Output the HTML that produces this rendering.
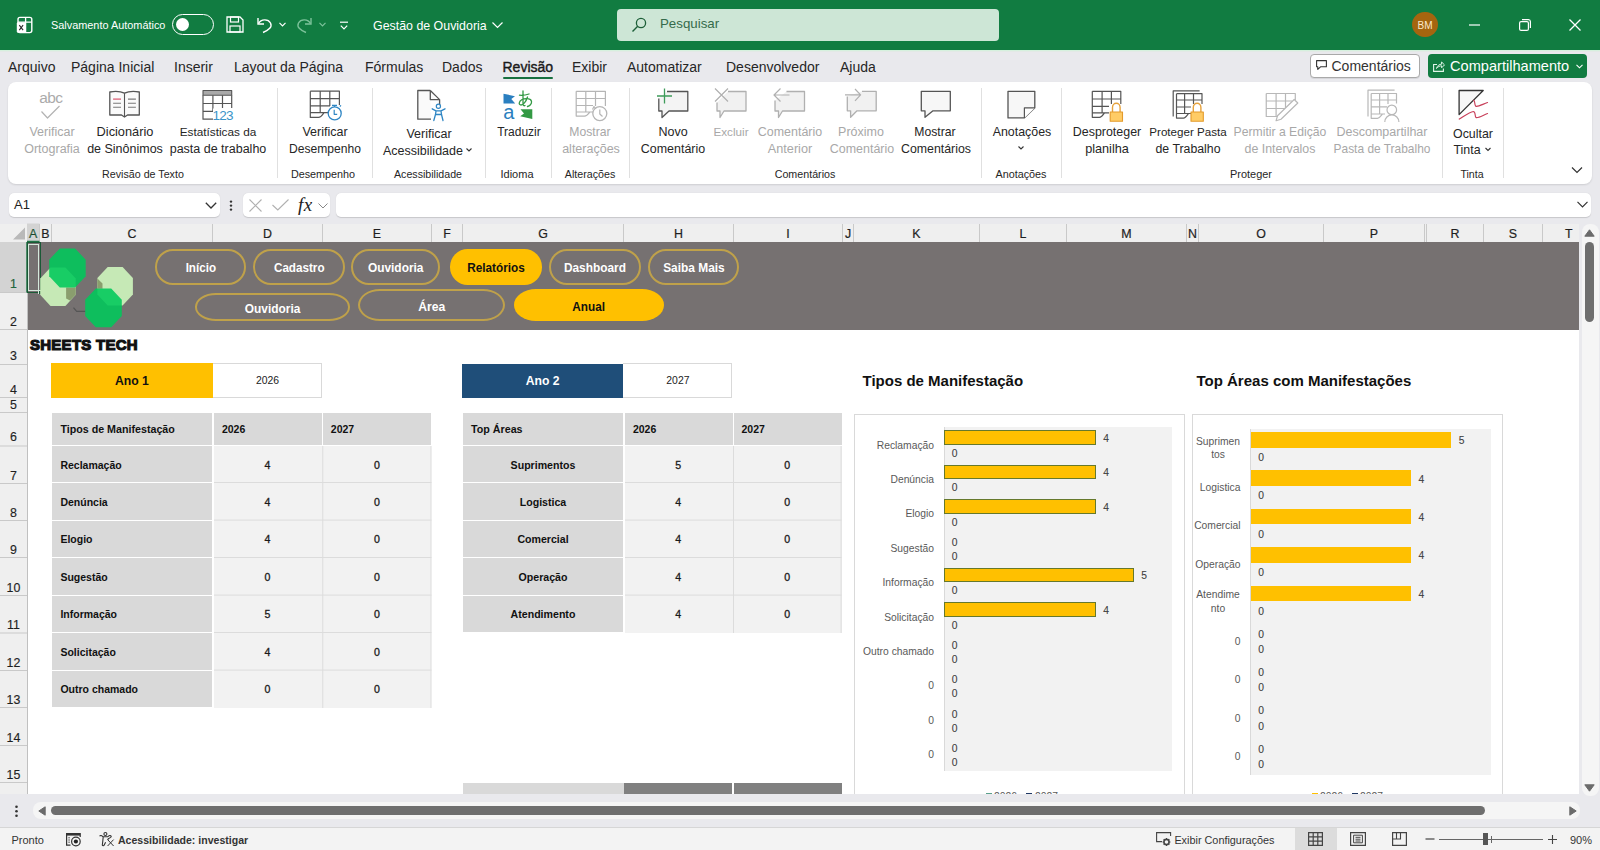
<!DOCTYPE html>
<html><head><meta charset="utf-8">
<style>
*{box-sizing:border-box;margin:0;padding:0}
html,body{width:1600px;height:850px;overflow:hidden;background:#e9e9ed;font-family:"Liberation Sans",sans-serif;color:#262626}
.a{position:absolute}
.t{position:absolute;white-space:nowrap;line-height:16px;height:16px}
.c{text-align:center}
.r{text-align:right}
svg{position:absolute;overflow:visible}
#title{left:0;top:0;width:1600px;height:50px;background:#117c41;color:#fff}
#tabs{left:0;top:50px;width:1600px;height:32px;background:#e9e9ed}
.tab{position:absolute;top:58px;font-size:14px;line-height:18px;color:#262626;white-space:nowrap}
#ribbon{left:8px;top:82px;width:1584px;height:102px;background:#fff;border-radius:8px;box-shadow:0 1px 2px rgba(0,0,0,.12)}
.rt{position:absolute;font-size:12.5px;line-height:16px;white-space:nowrap;text-align:center;color:#262626}
.dis{color:#a8a8a8}
.gl{position:absolute;top:167px;font-size:10.8px;line-height:15px;white-space:nowrap;text-align:center;color:#262626}
.sep{position:absolute;top:88px;width:1px;height:90px;background:#e1e1e1}
</style></head><body>
<!-- TITLE BAR -->
<div id="title" class="a">
  <!-- excel icon -->
  <svg style="left:0;top:0" width="40" height="40" viewBox="0 0 40 40">
    <rect x="18" y="17.4" width="13.8" height="15.2" rx="2" fill="none" stroke="#fff" stroke-width="1.4"/>
    <path d="M25.6 17.4V32.6M18 22.1H31.8" stroke="#fff" stroke-width="1.3"/>
    <rect x="16.8" y="22.3" width="8.9" height="10.5" rx="1.3" fill="#fff"/>
    <path d="M19.3 25.2L23.1 30.2M23.1 25.2L19.3 30.2" stroke="#2b2b2b" stroke-width="1.1"/>
  </svg>
  <div class="t" style="left:51px;top:17px;font-size:10.9px;color:#fff">Salvamento Automático</div>
  <div class="a" style="left:172px;top:14px;width:42px;height:21px;border:1.3px solid #fff;border-radius:11px"></div>
  <div class="a" style="left:176px;top:18px;width:13px;height:13px;background:#fff;border-radius:50%"></div>
  <!-- save -->
  <svg style="left:226px;top:16px" width="18" height="17" viewBox="0 0 18 17">
    <path d="M1 1H14L17 4V16H1Z" fill="none" stroke="#fff" stroke-width="1.3"/>
    <rect x="4.5" y="1" width="8" height="5" fill="none" stroke="#fff" stroke-width="1.2"/>
    <rect x="4" y="10" width="10" height="6" fill="none" stroke="#fff" stroke-width="1.2"/>
  </svg>
  <!-- undo -->
  <svg style="left:256px;top:16px" width="17" height="17" viewBox="0 0 17 17">
    <path d="M2 2V8H8" fill="none" stroke="#fff" stroke-width="1.4"/>
    <path d="M2.5 7.5C5 3 12 2.5 14.5 7C16.5 11 13 14 7 16.5" fill="none" stroke="#fff" stroke-width="1.4"/>
  </svg>
  <svg style="left:279px;top:22px" width="7" height="5" viewBox="0 0 7 5"><path d="M.5 .8L3.5 3.8L6.5 .8" fill="none" stroke="#fff" stroke-width="1.2"/></svg>
  <svg style="left:296px;top:16px" width="17" height="17" viewBox="0 0 17 17">
    <path d="M15 2V8H9" fill="none" stroke="#7cc29a" stroke-width="1.4"/>
    <path d="M14.5 7.5C12 3 5 2.5 2.5 7C.5 11 4 14 10 16.5" fill="none" stroke="#7cc29a" stroke-width="1.4"/>
  </svg>
  <svg style="left:319px;top:22px" width="7" height="5" viewBox="0 0 7 5"><path d="M.5 .8L3.5 3.8L6.5 .8" fill="none" stroke="#7cc29a" stroke-width="1.2"/></svg>
  <svg style="left:340px;top:21px" width="8" height="9" viewBox="0 0 8 9"><path d="M0 1.2H8" stroke="#fff" stroke-width="1.2"/><path d="M.8 4.6L4 7.8L7.2 4.6" fill="none" stroke="#fff" stroke-width="1.2"/></svg>
  <div class="t" style="left:373px;top:18px;font-size:12.4px;color:#fff">Gestão de Ouvidoria</div>
  <svg style="left:492px;top:22px" width="11" height="6" viewBox="0 0 11 6"><path d="M.5 .5L5.5 5.5L10.5 .5" fill="none" stroke="#fff" stroke-width="1.2"/></svg>
  <!-- search -->
  <div class="a" style="left:617px;top:9px;width:382px;height:32px;background:#cde6d6;border-radius:4px"></div>
  <svg style="left:631px;top:17px" width="16" height="16" viewBox="0 0 16 16"><circle cx="10" cy="6" r="4.6" fill="none" stroke="#1d5f38" stroke-width="1.3"/><path d="M6.7 9.3L1.5 14.5" stroke="#1d5f38" stroke-width="1.4"/></svg>
  <div class="t" style="left:660px;top:15px;font-size:13.3px;line-height:17px;color:#356b4b">Pesquisar</div>
  <!-- avatar -->
  <div class="a" style="left:1412.3px;top:11.8px;width:25.4px;height:25.4px;border-radius:50%;background:#a5650f"></div>
  <div class="t c" style="left:1412.3px;top:17.5px;width:25.4px;font-size:10px;color:#fbe9cc">BM</div>
  <svg style="left:1469px;top:23.5px" width="11" height="2" viewBox="0 0 11 2"><path d="M0 1H11" stroke="#fff" stroke-width="1.2"/></svg>
  <svg style="left:1519px;top:19px" width="12" height="12" viewBox="0 0 12 12"><rect x=".6" y="2.6" width="8.8" height="8.8" rx="1.5" fill="none" stroke="#fff" stroke-width="1.2"/><path d="M3 .6H9.5A2 2 0 0 1 11.4 2.5V9" fill="none" stroke="#fff" stroke-width="1.2"/></svg>
  <svg style="left:1569px;top:19px" width="12" height="12" viewBox="0 0 12 12"><path d="M.5 .5L11.5 11.5M11.5 .5L.5 11.5" stroke="#fff" stroke-width="1.3"/></svg>
</div>

<!-- TABS -->
<div id="tabs" class="a"></div>
<div class="a" style="left:0;top:50px;width:1600px;height:1px;background:#d6f1de"></div><div class="a" style="left:0;top:51px;width:1600px;height:1px;background:#e3e9e6"></div>
<div class="tab" style="left:8px">Arquivo</div>
<div class="tab" style="left:71px">Página Inicial</div>
<div class="tab" style="left:174px">Inserir</div>
<div class="tab" style="left:234px">Layout da Página</div>
<div class="tab" style="left:365px">Fórmulas</div>
<div class="tab" style="left:442px">Dados</div>
<div class="tab" style="left:502.5px;color:#1a1a1a;-webkit-text-stroke:0.4px #1a1a1a">Revisão</div>
<div class="a" style="left:503px;top:76.8px;width:50px;height:2.2px;background:#17703f;border-radius:1.5px"></div>
<div class="tab" style="left:572px">Exibir</div>
<div class="tab" style="left:627px">Automatizar</div>
<div class="tab" style="left:726px">Desenvolvedor</div>
<div class="tab" style="left:840px">Ajuda</div>

<div class="a" style="left:1310px;top:54px;width:110px;height:24px;background:#fff;border:1px solid #a9a9a9;border-radius:4px;box-shadow:0 1px 0 rgba(0,0,0,.08)"></div>
<svg style="left:1316px;top:60px" width="11" height="10" viewBox="0 0 11 10"><path d="M.6 .6H10.4V6.8H4.5L1.8 9.4V6.8H.6Z" fill="none" stroke="#333" stroke-width="1.1" stroke-linejoin="round"/></svg>
<div class="tab" style="left:1331.5px;top:57px;color:#333">Comentários</div>
<div class="a" style="left:1428px;top:54px;width:159px;height:24px;background:#117c41;border-radius:4px"></div>
<svg style="left:1433px;top:60px" width="12" height="12" viewBox="0 0 12 12"><path d="M4 4.5H.6V11.4H10.4V8.5" fill="none" stroke="#e0f5e8" stroke-width="1.1"/><path d="M3.5 8.5C4.2 5.5 6.5 4.2 8.6 4.2V2L11.5 4.9L8.6 7.8V5.8C6.8 5.8 5 6.6 3.5 8.5Z" fill="none" stroke="#e0f5e8" stroke-width="1" stroke-linejoin="round"/></svg>
<div class="tab" style="left:1450px;top:57px;color:#fff;font-size:14.6px">Compartilhamento</div>
<svg style="left:1576px;top:64px" width="7" height="5" viewBox="0 0 7 5"><path d="M.5 .8L3.5 3.8L6.5 .8" fill="none" stroke="#fff" stroke-width="1.1"/></svg>

<!-- RIBBON -->
<div id="ribbon" class="a"></div>
<!-- RIBBON_CONTENT -->
<svg style="left:0;top:0" width="1600" height="200" viewBox="0 0 1600 200">
 <g fill="none" stroke-linejoin="round">
  <!-- abc check (disabled) -->
  <text x="50.8" y="102.7" font-family="Liberation Sans" font-size="15.5" fill="#ababab" text-anchor="middle" letter-spacing="-0.6">abc</text>
  <path d="M41.5 111.5L47.5 118L59.5 106" stroke="#b3b3b3" stroke-width="1.2"/>
  <!-- book -->
  <path d="M109.8 92C114 91.3 120.5 91.3 124.5 93.2C128.5 91.3 135 91.3 139.3 92V115H127.5L124.5 117L121.5 115H109.8Z" fill="#fafafa" stroke="#555" stroke-width="1.3"/>
  <path d="M124.5 93.2V116.5" stroke="#555" stroke-width="1.1"/>
  <path d="M113.1 99.1H121" stroke="#d9546c" stroke-width="1.2"/>
  <path d="M113.1 103.2H121M113.1 107.3H121M128 99.1H135.9M128 103.2H135.9M128 107.3H135.9" stroke="#7a7a7a" stroke-width="1.1"/>
  <!-- stats -->
  <rect x="203" y="90.5" width="28.7" height="4.7" fill="#a9a9a9" stroke="#555" stroke-width="1.1"/>
  <path d="M203 95.2V119.2H213M203 103.5H231.7M203 111.4H213M212.9 95.2V111.4M222.5 95.2V108M231.7 95.2V108" stroke="#555" stroke-width="1.2"/>
  <rect x="213" y="108.5" width="20" height="12" fill="#fff" stroke="none"/>
  <text x="222.6" y="119.7" font-family="Liberation Sans" font-size="13.5" fill="#3a94c9" text-anchor="middle" letter-spacing="-0.8">123</text>
  <!-- desempenho -->
  <path d="M310.3 91.2H339.4V105M310.3 91.2V117.4H318.5C321 117.4 322 115.5 324 112.7H328M310.3 98.65H339.4M310.3 105.9H330M310.3 112.7H324M320.2 91.2V112.7M329.8 91.2V106" stroke="#555" stroke-width="1.2"/>
  <circle cx="334.7" cy="113.4" r="6.5" fill="#fff" stroke="#2f86c4" stroke-width="1.3"/>
  <path d="M334.2 109.7V114.3H337.2M332 105.4H337M334.5 105.4V106.9M339.8 106.5L341 105.3" stroke="#2f86c4" stroke-width="1.2"/>
  <!-- acessibilidade -->
  <path d="M430.3 90.5H417.8V119.2H431M430.3 90.5L439.6 99.6V105M430.3 90.5V99.6H439.6" fill="#fafafa" stroke="#555" stroke-width="1.3"/>
  <circle cx="438.4" cy="106.3" r="2.1" fill="#fff" stroke="#2f86c4" stroke-width="1.2"/>
  <path d="M432.2 108.8L436 110.8H441L445 108.8M436 110.8L435.5 114.5L433.8 120.5M441 110.8L441.5 114.5L443 120.5M435.5 114.5H441.5" stroke="#2f86c4" stroke-width="1.3" stroke-linecap="round"/>
  <!-- traduzir -->
  <path d="M503.5 93.7L515 96.2L511.3 99L515.2 103.5H503.5Z" fill="#2a7fc0" stroke="none"/>
  <text x="508.9" y="119" font-family="Liberation Sans" font-size="20" fill="#2a7fc0" text-anchor="middle">a</text>
  <path d="M519.5 95.2C522.5 95.5 526 95 529 94M523 91V103.5C523 105.5 524 106.2 525 105.5M527.5 97C526 102 523 105 521 105C518.5 105 518.5 101.5 522 99.5C525 98 531 98 531.5 101.5C532 104 529.5 106 527.5 106.5" stroke="#339944" stroke-width="1.3" stroke-linecap="round"/>
  <path d="M532.3 119L520.2 116.2L524 113.5L520.5 109.2H532.3Z" fill="#339944" stroke="none"/>
  <!-- alteracoes (disabled) -->
  <path d="M576.2 91.3H605.4V105M576.2 91.3V116.1H584.5C587 116.1 588 114.5 590 112H593M576.2 98.5H605.4M576.2 105.5H593M576.2 112H590M585.8 91.3V112M595.5 91.3V106M605.4 91.3V106" stroke="#b5b5b5" stroke-width="1.2"/>
  <circle cx="599.8" cy="113.6" r="7" fill="#fff" stroke="#b5b5b5" stroke-width="1.3"/>
  <path d="M599.8 109.5V114L602.5 116.5M592.5 109.5L594 106.5L596 109" stroke="#b5b5b5" stroke-width="1.2"/>
  <!-- novo comentario -->
  <path d="M667 91.5H687.8V111H669L662 117.5V111H658.8V98.5" fill="#f4f4f4" stroke="#555" stroke-width="1.3"/>
  <path d="M664.5 88.5V103.5M657 96H672" stroke="#3e9c5a" stroke-width="1.3"/>
  <!-- excluir -->
  <path d="M728 91.5H746V111H724L720 117.5V111H717V102.5" fill="#f1f1f1" stroke="#b0b0b0" stroke-width="1.3"/>
  <path d="M715 88.5L728 101.5M728 88.5L715 101.5" stroke="#b0b0b0" stroke-width="1.2"/>
  <!-- anterior -->
  <path d="M786.5 91.5H804.5V111H782.5L778.5 117.5V111H775V100.5" fill="#f1f1f1" stroke="#b0b0b0" stroke-width="1.3"/>
  <path d="M774.5 95H789.5M780.5 88.5L774 95L780.5 101.5" stroke="#b0b0b0" stroke-width="1.2"/>
  <!-- proximo -->
  <path d="M862 91.3H876.2V110.8H857L850.6 117.3V110.8H847.3V96.6" fill="#f1f1f1" stroke="#b0b0b0" stroke-width="1.3"/>
  <path d="M845 94.8H860.6M855 89L860.6 94.8L855 100.8" stroke="#b0b0b0" stroke-width="1.2"/>
  <!-- mostrar comentarios -->
  <path d="M921.3 91.3H950.3V110.8H933L925 117.3V110.8H921.3Z" fill="#f7f7f7" stroke="#555" stroke-width="1.3"/>
  <!-- anotacoes -->
  <path d="M1008 91.3H1034.8V107.9L1024.4 117.9H1008Z" fill="#f7f7f7" stroke="#555" stroke-width="1.3"/>
  <path d="M1024.4 117.9V107.9H1034.8" fill="#fff" stroke="#555" stroke-width="1.2"/>
  <!-- desproteger -->
  <path d="M1092.3 91.3H1120.8V104M1092.3 91.3V117.3H1099.5C1101.5 117.3 1102.5 115.5 1104.5 112.8H1109M1092.3 99H1120.8M1092.3 106.3H1109M1092.3 112.8H1104.5M1102.1 91.3V112.8M1111.4 91.3V104" stroke="#555" stroke-width="1.2"/>
  <path d="M1112.5 112V107.5A3.8 4.2 0 0 1 1120.1 107.5V112" fill="none" stroke="#e6a23c" stroke-width="1.4"/>
  <rect x="1110.2" y="112" width="12.3" height="9.2" fill="#ffcc66" stroke="#e39a2b" stroke-width="1.1"/>
  <!-- proteger pasta -->
  <path d="M1173.2 116.5V90.9H1199.6" stroke="#555" stroke-width="1.2"/>
  <path d="M1176.5 93.7H1202V104M1176.5 93.7V118.1H1183.5C1185.5 118.1 1186.5 116.3 1188.5 113.5H1191M1176.5 100H1202M1176.5 107H1191M1176.5 113.5H1188.5M1184.6 93.7V113.5M1193.5 93.7V104" stroke="#555" stroke-width="1.2"/>
  <path d="M1193.3 112V107.5A3.8 4.2 0 0 1 1200.9 107.5V112" fill="none" stroke="#e6a23c" stroke-width="1.4"/>
  <rect x="1191" y="112" width="12.3" height="9.2" fill="#ffcc66" stroke="#e39a2b" stroke-width="1.1"/>
  <!-- permitir edicao (disabled) -->
  <path d="M1266.25 93.5H1295.3V100M1266.25 93.5V116.5H1284M1266.25 101H1292M1266.25 108.5H1287M1276.1 93.5V116.5M1285.5 93.5V108" stroke="#b8b8b8" stroke-width="1.2"/>
  <path d="M1294.2 99.5L1297.8 103L1281 119.2L1276.1 120.7L1277.5 115.8Z" fill="#fff" stroke="#b8b8b8" stroke-width="1.2"/>
  <!-- descompartilhar (disabled) -->
  <path d="M1368 116.5V90.2H1394.6" stroke="#b8b8b8" stroke-width="1.2"/>
  <path d="M1371.2 93.5H1396.5V103.5M1371.2 93.5V118.3H1377.5C1379.5 118.3 1380.5 116.5 1382.5 114H1385M1371.2 100H1396.5M1371.2 106.8H1387M1371.2 114H1385M1379.6 93.5V114M1388 93.5V104" stroke="#b8b8b8" stroke-width="1.2"/>
  <circle cx="1391.8" cy="109.9" r="4.8" fill="#fff" stroke="#b8b8b8" stroke-width="1.2"/>
  <path d="M1384.8 122A7 7 0 0 1 1398.9 122" fill="#fff" stroke="#b8b8b8" stroke-width="1.2"/>
  <!-- tinta -->
  <path d="M1459.1 90.5H1483.2L1459.1 114.6Z" fill="#f6f6f6" stroke="#333" stroke-width="1.3"/>
  <path d="M1473.6 100.3C1475.5 101 1474 104.5 1475.8 106.2C1477.5 107.3 1483 104 1487.5 102.5" stroke="#c8405a" stroke-width="1.2" stroke-linecap="round"/>
  <path d="M1459.3 119.1C1464 116.2 1470 111.8 1473.3 111.5C1476 111.5 1474.5 116.5 1476 117.5C1478 118.5 1483 115.2 1487.5 113.5" stroke="#c8405a" stroke-width="1.2" stroke-linecap="round"/>
 </g>
 <g stroke="#e0e0e0" stroke-width="1">
  <path d="M277.5 88V178M372.5 88V178M485.5 88V178M551.5 88V178M629.5 88V178M981.5 88V178M1061.5 88V178M1442.5 88V178M1503.5 88V178"/>
 </g>
 <g fill="none" stroke="#333" stroke-width="1.1">
  <path d="M466.5 148.5L469 151L471.5 148.5"/>
  <path d="M1018.5 146.5L1021 149L1023.5 146.5"/>
  <path d="M1485.5 148L1488 150.5L1490.5 148"/>
  <path d="M1572 167.5L1577 172.5L1582 167.5" stroke-width="1.2"/>
 </g>
</svg>
<div class="rt dis" style="left:12px;width:80px;top:124px">Verificar</div>
<div class="rt dis" style="left:12px;width:80px;top:141px">Ortografia</div>
<div class="rt" style="left:85px;width:80px;top:124px;font-size:12.8px">Dicionário</div>
<div class="rt" style="left:85px;width:80px;top:141px">de Sinônimos</div>
<div class="rt" style="left:168px;width:100px;top:124px;font-size:11.8px">Estatísticas da</div>
<div class="rt" style="left:168px;width:100px;top:141px;font-size:12.5px">pasta de trabalho</div>
<div class="gl" style="left:93px;width:100px;font-size:10.7px">Revisão de Texto</div>
<div class="rt" style="left:285px;width:80px;top:124px">Verificar</div>
<div class="rt" style="left:285px;width:80px;top:141px;font-size:12.1px">Desempenho</div>
<div class="gl" style="left:283px;width:80px">Desempenho</div>
<div class="rt" style="left:379px;width:100px;top:125.5px">Verificar</div>
<div class="rt" style="left:373px;width:100px;top:142.5px">Acessibilidade</div>
<div class="gl" style="left:378px;width:100px;font-size:10.65px">Acessibilidade</div>
<div class="rt" style="left:479px;width:80px;top:124px;font-size:12px">Traduzir</div>
<div class="gl" style="left:477px;width:80px;font-size:11px">Idioma</div>
<div class="rt dis" style="left:550px;width:80px;top:124px;font-size:12.2px">Mostrar</div>
<div class="rt dis" style="left:551px;width:80px;top:141px">alterações</div>
<div class="gl" style="left:550px;width:80px;font-size:10.7px">Alterações</div>
<div class="rt" style="left:633px;width:80px;top:124px">Novo</div>
<div class="rt" style="left:633px;width:80px;top:141px;font-size:12.45px">Comentário</div>
<div class="rt dis" style="left:701px;width:60px;top:124px;font-size:11.7px">Excluir</div>
<div class="rt dis" style="left:750px;width:80px;top:124px;font-size:12.45px">Comentário</div>
<div class="rt dis" style="left:750px;width:80px;top:141px;font-size:12.7px">Anterior</div>
<div class="rt dis" style="left:821px;width:80px;top:124px;font-size:12.5px">Próximo</div>
<div class="rt dis" style="left:822px;width:80px;top:141px;font-size:12.45px">Comentário</div>
<div class="rt" style="left:895px;width:80px;top:124px;font-size:12.2px">Mostrar</div>
<div class="rt" style="left:896px;width:80px;top:141px;font-size:12.35px">Comentários</div>
<div class="gl" style="left:755px;width:100px;font-size:10.7px">Comentários</div>
<div class="rt" style="left:982px;width:80px;top:124px;font-size:12.4px">Anotações</div>
<div class="gl" style="left:981px;width:80px;font-size:10.8px">Anotações</div>
<div class="rt" style="left:1067px;width:80px;top:124px;font-size:12.45px">Desproteger</div>
<div class="rt" style="left:1067px;width:80px;top:141px;font-size:12.7px">planilha</div>
<div class="rt" style="left:1138px;width:100px;top:124px;font-size:11.6px">Proteger Pasta</div>
<div class="rt" style="left:1138px;width:100px;top:141px;font-size:12.3px">de Trabalho</div>
<div class="rt dis" style="left:1230px;width:100px;top:124px;font-size:12.2px">Permitir a Edição</div>
<div class="rt dis" style="left:1230px;width:100px;top:141px;font-size:12.4px">de Intervalos</div>
<div class="rt dis" style="left:1327px;width:110px;top:124px;font-size:12.5px">Descompartilhar</div>
<div class="rt dis" style="left:1327px;width:110px;top:141px;font-size:11.95px">Pasta de Trabalho</div>
<div class="gl" style="left:1211px;width:80px;font-size:10.95px">Proteger</div>
<div class="rt" style="left:1433px;width:80px;top:125.5px;font-size:12.4px">Ocultar</div>
<div class="rt" style="left:1427px;width:80px;top:142px;font-size:12.4px">Tinta</div>
<div class="gl" style="left:1432px;width:80px;font-size:10.6px">Tinta</div>


<!-- FORMULA BAR -->
<!-- FORMULA_CONTENT -->

<!-- GRID -->
<!-- GRID_CONTENT -->
<!-- formula bar -->
<div class="a" style="left:9px;top:193px;width:211px;height:24px;background:#fff;border-radius:5px;box-shadow:0 .5px 1px rgba(0,0,0,.15)"></div>
<div class="t" style="left:14px;top:197px;font-size:13px;color:#222">A1</div>
<svg style="left:205px;top:202px" width="12" height="7" viewBox="0 0 12 7"><path d="M.8 .8L6 6L11.2 .8" fill="none" stroke="#333" stroke-width="1.3"/></svg>
<svg style="left:229px;top:200px" width="4" height="12" viewBox="0 0 4 12"><circle cx="2" cy="1.6" r="1.2" fill="#333"/><circle cx="2" cy="5.6" r="1.2" fill="#333"/><circle cx="2" cy="9.6" r="1.2" fill="#333"/></svg>
<div class="a" style="left:242.5px;top:193px;width:87px;height:24px;background:#fff;border-radius:5px;box-shadow:0 .5px 1px rgba(0,0,0,.15)"></div>
<svg style="left:249px;top:199px" width="13" height="13" viewBox="0 0 13 13"><path d="M.5 .5L12.5 12.5M12.5 .5L.5 12.5" stroke="#b0b0b0" stroke-width="1.1"/></svg>
<svg style="left:272px;top:199px" width="17" height="12" viewBox="0 0 17 12"><path d="M.5 6L5.8 11L16.5 .5" fill="none" stroke="#b0b0b0" stroke-width="1.1"/></svg>
<div class="t" style="left:298px;top:194.5px;font-family:'Liberation Serif',serif;font-style:italic;font-size:19px;line-height:20px;height:20px;color:#222;letter-spacing:0.5px">fx</div>
<svg style="left:318px;top:203px" width="10" height="6" viewBox="0 0 10 6"><path d="M.5 .5L5 5L9.5 .5" fill="none" stroke="#888" stroke-width="1"/></svg>
<div class="a" style="left:336px;top:193px;width:1255px;height:24px;background:#fff;border-radius:5px;box-shadow:0 .5px 1px rgba(0,0,0,.15)"></div>
<svg style="left:1577px;top:201px" width="11" height="7" viewBox="0 0 11 7"><path d="M.5 .8L5.5 5.8L10.5 .8" fill="none" stroke="#333" stroke-width="1.2"/></svg>

<!-- column headers -->
<div class="a" style="left:0;top:223.5px;width:1579px;height:19px;background:#efefef"></div>
<div class="a" style="left:0;top:242px;width:27.5px;height:552px;background:#efefef;border-right:1px solid #c0c0c0"></div>
<svg style="left:0;top:223px" width="1580" height="20" viewBox="0 223 1580 20">
  <path d="M13 239.5L25 227.5V239.5Z" fill="#b9b9b9"/>
  <rect x="27" y="223.5" width="12.5" height="18.5" fill="#d3d3d3"/>
  <g stroke="#c9c9c9" stroke-width="1">
   <path d="M39.5 224V242M51.5 224V242M212.5 224V242M322.5 224V242M431.5 224V242M462.5 224V242M623.5 224V242M733.5 224V242M842.5 224V242M853.5 224V242M979.5 224V242M1066.5 224V242M1186.5 224V242M1198.5 224V242M1323.5 224V242M1424.5 224V242M1426.5 224V242M1483.5 224V242M1542.5 224V242"/>
  </g>
  <path d="M27 241.5H39.5" stroke="#217346" stroke-width="1.5"/>
</svg>
<div class="a" style="left:0;top:224.5px;width:1579px;height:19px;font-size:12.4px;line-height:19px;color:#1f1f1f;-webkit-text-stroke:0.2px #1f1f1f">
 <span class="a c" style="left:27px;width:12.5px;color:#1e6b3e">A</span>
 <span class="a c" style="left:39.5px;width:12px">B</span>
 <span class="a c" style="left:51.5px;width:161px">C</span>
 <span class="a c" style="left:212.5px;width:110px">D</span>
 <span class="a c" style="left:322.5px;width:109px">E</span>
 <span class="a c" style="left:431.5px;width:31px">F</span>
 <span class="a c" style="left:462.5px;width:161px">G</span>
 <span class="a c" style="left:623.5px;width:110px">H</span>
 <span class="a c" style="left:733.5px;width:109px">I</span>
 <span class="a c" style="left:842.5px;width:11px">J</span>
 <span class="a c" style="left:853.5px;width:126px">K</span>
 <span class="a c" style="left:979.5px;width:87px">L</span>
 <span class="a c" style="left:1066.5px;width:120px">M</span>
 <span class="a c" style="left:1186.5px;width:12px">N</span>
 <span class="a c" style="left:1198.5px;width:125px">O</span>
 <span class="a c" style="left:1323.5px;width:101px">P</span>
 <span class="a c" style="left:1426.5px;width:57px">R</span>
 <span class="a c" style="left:1483.5px;width:59px">S</span>
 <span class="a" style="left:1565px">T</span>
</div>
<!-- row headers -->
<div class="a" style="left:0;top:242px;width:27px;height:50.5px;background:#d3d3d3"></div>
<svg style="left:0;top:242px" width="28" height="553" viewBox="0 242 28 553">
 <g stroke="#c9c9c9" stroke-width="1">
  <path d="M0 292.5H27M0 329.5H27M0 364.5H27M0 397.5H27M0 412.5H27M0 446H27M0 483.5H27M0 520.5H27M0 557.5H27M0 595.5H27M0 633H27M0 670.5H27M0 707.5H27M0 745.5H27M0 782.5H27"/>
 </g>
 <path d="M27 242V292.5" stroke="#217346" stroke-width="1.5"/>
</svg>
<div class="a" style="left:0;top:0;width:27px;height:795px;font-size:12.4px;line-height:14px;color:#1f1f1f;-webkit-text-stroke:0.15px #1f1f1f">
 <span class="a c" style="left:0;width:27px;top:277px;color:#1e6b3e">1</span>
 <span class="a c" style="left:0;width:27px;top:314.5px">2</span>
 <span class="a c" style="left:0;width:27px;top:349px">3</span>
 <span class="a c" style="left:0;width:27px;top:382.5px">4</span>
 <span class="a c" style="left:0;width:27px;top:397.5px">5</span>
 <span class="a c" style="left:0;width:27px;top:430px">6</span>
 <span class="a c" style="left:0;width:27px;top:468.5px">7</span>
 <span class="a c" style="left:0;width:27px;top:505.5px">8</span>
 <span class="a c" style="left:0;width:27px;top:542.5px">9</span>
 <span class="a c" style="left:0;width:27px;top:580.5px">10</span>
 <span class="a c" style="left:0;width:27px;top:617.5px">11</span>
 <span class="a c" style="left:0;width:27px;top:655.5px">12</span>
 <span class="a c" style="left:0;width:27px;top:693px">13</span>
 <span class="a c" style="left:0;width:27px;top:730.5px">14</span>
 <span class="a c" style="left:0;width:27px;top:768px">15</span>
</div>
<!-- sheet -->
<div class="a" style="left:28px;top:242px;width:1551px;height:552px;background:#fff"></div>
<div class="a" style="left:28px;top:242px;width:1551px;height:87.5px;background:#767171"></div>
<!-- selected A1 -->
<div class="a" style="left:27px;top:242.3px;width:13.8px;height:50.4px;border:1.3px solid #1a5a36"></div>
<div class="a" style="left:28.3px;top:243.6px;width:11.2px;height:47.8px;border:1px solid #d5e9dc"></div>
<div class="a" style="left:37.6px;top:290px;width:4.4px;height:4.4px;background:#1a5a36;border-left:1px solid #d5e9dc;border-top:1px solid #d5e9dc"></div>


<!-- GRID2 -->
<div class="a" style="left:0;top:0;width:1579px;height:794px;overflow:hidden">
<svg style="left:0;top:0" width="1600" height="850" viewBox="0 0 1600 850">
<defs><clipPath id="l1"><polygon points="50.2,267.4 65.4,267.4 75.7,278.6 75.7,294.8 65.4,306 50.2,306 40.2,294.8 40.2,278.6"/></clipPath></defs>
<polygon points="50.5,267.4 65.4,267.4 75.7,278.6 75.7,294.8 65.4,306.0 50.5,306.0 40.2,294.8 40.2,278.6" fill="#c6e9b6" fill-opacity="1"/>
<polygon points="107.7,266.9 122.6,266.9 132.9,278.1 132.9,294.4 122.6,305.6 107.7,305.6 97.4,294.4 97.4,278.1" fill="#c6e9b6" fill-opacity="1"/>
<polygon points="66.1,287.5 75.7,287.5 75.7,294.8 70,300.5 66.1,298.5" fill="#8a9e6e"/>
<polygon points="97.4,278.6 102.5,283.5 102.5,288.8 97.4,288.8" fill="#8a9e6e"/>
<path d="M73.5 307.7L76.7 311.4H85.5" stroke="#555" stroke-width="1.2" fill="none"/>
<polygon points="59.8,248.4 75.1,248.4 85.7,259.7 85.7,276.2 75.1,287.5 59.8,287.5 49.2,276.2 49.2,259.7" fill="#00c85a" fill-opacity="0.88"/>
<polygon points="95.8,288.6 111.2,288.6 121.8,299.8 121.8,316.1 111.2,327.3 95.8,327.3 85.2,316.1 85.2,299.8" fill="#00c85a" fill-opacity="0.88"/>
</svg>
<div class="a" style="left:154.5px;top:248.8px;width:91.69999999999999px;height:36.19999999999999px;border:2.1px solid #bfa14a;border-radius:18.099999999999994px/18.099999999999994px"></div>
<div class="t c" style="left:154.5px;width:91.69999999999999px;top:260px;font-size:12.5px;font-weight:700;color:#fff;transform:scaleX(0.932)">Início</div>
<div class="a" style="left:252.5px;top:248.8px;width:92.5px;height:36.19999999999999px;border:2.1px solid #bfa14a;border-radius:18.099999999999994px/18.099999999999994px"></div>
<div class="t c" style="left:252.5px;width:92.5px;top:260px;font-size:12.5px;font-weight:700;color:#fff;transform:scaleX(0.934)">Cadastro</div>
<div class="a" style="left:350.6px;top:248.8px;width:89.39999999999998px;height:36.19999999999999px;border:2.1px solid #bfa14a;border-radius:18.099999999999994px/18.099999999999994px"></div>
<div class="t c" style="left:350.6px;width:89.39999999999998px;top:260px;font-size:12.5px;font-weight:700;color:#fff;transform:scaleX(0.952)">Ouvidoria</div>
<div class="a" style="left:450px;top:249.4px;width:91.89999999999998px;height:35.400000000000006px;background:#ffc000;border-radius:17.700000000000003px/17.700000000000003px"></div>
<div class="t c" style="left:450px;width:91.89999999999998px;top:260px;font-size:12.5px;font-weight:700;color:#111;transform:scaleX(0.941)">Relatórios</div>
<div class="a" style="left:549.4px;top:248.8px;width:91.80000000000007px;height:36.19999999999999px;border:2.1px solid #bfa14a;border-radius:18.099999999999994px/18.099999999999994px"></div>
<div class="t c" style="left:549.4px;width:91.80000000000007px;top:260px;font-size:12.5px;font-weight:700;color:#fff;transform:scaleX(0.949)">Dashboard</div>
<div class="a" style="left:647.5px;top:248.8px;width:91.89999999999998px;height:36.19999999999999px;border:2.1px solid #bfa14a;border-radius:18.099999999999994px/18.099999999999994px"></div>
<div class="t c" style="left:647.5px;width:91.89999999999998px;top:260px;font-size:12.5px;font-weight:700;color:#fff;transform:scaleX(0.952)">Saiba Mais</div>
<div class="a" style="left:194.8px;top:293px;width:155.2px;height:27.600000000000023px;border:2.1px solid #bfa14a;border-radius:21px/13.800000000000011px"></div>
<div class="t c" style="left:194.8px;width:155.2px;top:300.5px;font-size:12.5px;font-weight:700;color:#fff;transform:scaleX(0.952)">Ouvidoria</div>
<div class="a" style="left:357.5px;top:289.4px;width:147.5px;height:32.10000000000002px;border:2.1px solid #bfa14a;border-radius:22px/16.05000000000001px"></div>
<div class="t c" style="left:357.5px;width:147.5px;top:298.5px;font-size:12.5px;font-weight:700;color:#fff;transform:scaleX(0.971)">Área</div>
<div class="a" style="left:514.4px;top:289.4px;width:149.39999999999998px;height:31.900000000000034px;background:#ffc000;border-radius:22px/15.950000000000017px"></div>
<div class="t c" style="left:514.4px;width:149.39999999999998px;top:298.5px;font-size:12.5px;font-weight:700;color:#111;transform:scaleX(0.94)">Anual</div>
<div class="t" style="left:30px;top:336.5px;font-size:15.5px;line-height:15px;height:15px;font-weight:700;color:#111;transform:scaleX(0.965);transform-origin:0 0;-webkit-text-stroke:1.2px #111;letter-spacing:0.3px">SHEETS TECH</div>
<div class="a" style="left:51.2px;top:363.1px;width:161.5px;height:34.7px;background:#ffc000"></div>
<div class="t c" style="left:51.2px;width:161.5px;top:373px;font-size:12.2px;font-weight:700;color:#111">Ano 1</div>
<div class="a" style="left:212.7px;top:363.2px;width:109.6px;height:35.2px;background:#fff;border:1px solid #d9d9d9;border-left:none"></div>
<div class="t c" style="left:212.7px;width:109.6px;top:373px;font-size:10.4px;color:#222">2026</div>
<div class="a" style="left:462px;top:363.7px;width:161.3px;height:34px;background:#1f4e79"></div>
<div class="t c" style="left:462px;width:161.3px;top:373px;font-size:12.2px;font-weight:700;color:#fff">Ano 2</div>
<div class="a" style="left:623.3px;top:363.2px;width:109.2px;height:35.2px;background:#fff;border:1px solid #d9d9d9;border-left:none"></div>
<div class="t c" style="left:623.3px;width:109.2px;top:373px;font-size:10.4px;color:#222">2027</div>
<div class="a" style="left:51.9px;top:412.6px;width:379.6px;height:33.39999999999998px;background:#d9d9d9"></div>
<div class="a" style="left:212.4px;top:412.6px;width:1.2px;height:33.39999999999998px;background:#fff"></div>
<div class="a" style="left:322.3px;top:412.6px;width:1.2px;height:33.39999999999998px;background:#fff"></div>
<div class="a" style="left:51.9px;top:444.8px;width:379.6px;height:1.2px;background:#fff"></div>
<div class="t" style="left:60.4px;top:421px;font-size:10.7px;font-weight:700;color:#111">Tipos de Manifestação</div>
<div class="t" style="left:221.9px;top:421px;font-size:10.5px;font-weight:700;color:#111">2026</div>
<div class="t" style="left:330.8px;top:421px;font-size:10.5px;font-weight:700;color:#111">2027</div>
<div class="a" style="left:51.9px;top:446px;width:160.5px;height:37px;background:#d9d9d9;border-bottom:1.2px solid #fff"></div>
<div class="a" style="left:213.4px;top:446px;width:218.1px;height:37px;background:#f2f2f2"></div>
<div class="t" style="left:60.4px;top:456.5px;font-size:10.5px;font-weight:700;color:#111">Reclamação</div>
<div class="t c" style="left:212.4px;width:109.9px;top:456.5px;font-size:10.6px;color:#1a1a1a;-webkit-text-stroke:0.3px #1a1a1a">4</div>
<div class="t c" style="left:322.3px;width:109.19999999999999px;top:456.5px;font-size:10.6px;color:#1a1a1a;-webkit-text-stroke:0.3px #1a1a1a">0</div>
<div class="a" style="left:51.9px;top:483px;width:160.5px;height:37.60000000000002px;background:#d9d9d9;border-bottom:1.2px solid #fff"></div>
<div class="a" style="left:213.4px;top:483px;width:218.1px;height:37.60000000000002px;background:#f2f2f2"></div>
<div class="t" style="left:60.4px;top:493.8px;font-size:10.5px;font-weight:700;color:#111">Denúncia</div>
<div class="t c" style="left:212.4px;width:109.9px;top:493.8px;font-size:10.6px;color:#1a1a1a;-webkit-text-stroke:0.3px #1a1a1a">4</div>
<div class="t c" style="left:322.3px;width:109.19999999999999px;top:493.8px;font-size:10.6px;color:#1a1a1a;-webkit-text-stroke:0.3px #1a1a1a">0</div>
<div class="a" style="left:51.9px;top:520.6px;width:160.5px;height:37.39999999999998px;background:#d9d9d9;border-bottom:1.2px solid #fff"></div>
<div class="a" style="left:213.4px;top:520.6px;width:218.1px;height:37.39999999999998px;background:#f2f2f2"></div>
<div class="t" style="left:60.4px;top:531.3px;font-size:10.5px;font-weight:700;color:#111">Elogio</div>
<div class="t c" style="left:212.4px;width:109.9px;top:531.3px;font-size:10.6px;color:#1a1a1a;-webkit-text-stroke:0.3px #1a1a1a">4</div>
<div class="t c" style="left:322.3px;width:109.19999999999999px;top:531.3px;font-size:10.6px;color:#1a1a1a;-webkit-text-stroke:0.3px #1a1a1a">0</div>
<div class="a" style="left:51.9px;top:558px;width:160.5px;height:37.60000000000002px;background:#d9d9d9;border-bottom:1.2px solid #fff"></div>
<div class="a" style="left:213.4px;top:558px;width:218.1px;height:37.60000000000002px;background:#f2f2f2"></div>
<div class="t" style="left:60.4px;top:568.8px;font-size:10.5px;font-weight:700;color:#111">Sugestão</div>
<div class="t c" style="left:212.4px;width:109.9px;top:568.8px;font-size:10.6px;color:#1a1a1a;-webkit-text-stroke:0.3px #1a1a1a">0</div>
<div class="t c" style="left:322.3px;width:109.19999999999999px;top:568.8px;font-size:10.6px;color:#1a1a1a;-webkit-text-stroke:0.3px #1a1a1a">0</div>
<div class="a" style="left:51.9px;top:595.6px;width:160.5px;height:37.39999999999998px;background:#d9d9d9;border-bottom:1.2px solid #fff"></div>
<div class="a" style="left:213.4px;top:595.6px;width:218.1px;height:37.39999999999998px;background:#f2f2f2"></div>
<div class="t" style="left:60.4px;top:606.3px;font-size:10.5px;font-weight:700;color:#111">Informação</div>
<div class="t c" style="left:212.4px;width:109.9px;top:606.3px;font-size:10.6px;color:#1a1a1a;-webkit-text-stroke:0.3px #1a1a1a">5</div>
<div class="t c" style="left:322.3px;width:109.19999999999999px;top:606.3px;font-size:10.6px;color:#1a1a1a;-webkit-text-stroke:0.3px #1a1a1a">0</div>
<div class="a" style="left:51.9px;top:633px;width:160.5px;height:37.60000000000002px;background:#d9d9d9;border-bottom:1.2px solid #fff"></div>
<div class="a" style="left:213.4px;top:633px;width:218.1px;height:37.60000000000002px;background:#f2f2f2"></div>
<div class="t" style="left:60.4px;top:643.8px;font-size:10.5px;font-weight:700;color:#111">Solicitação</div>
<div class="t c" style="left:212.4px;width:109.9px;top:643.8px;font-size:10.6px;color:#1a1a1a;-webkit-text-stroke:0.3px #1a1a1a">4</div>
<div class="t c" style="left:322.3px;width:109.19999999999999px;top:643.8px;font-size:10.6px;color:#1a1a1a;-webkit-text-stroke:0.3px #1a1a1a">0</div>
<div class="a" style="left:51.9px;top:670.6px;width:160.5px;height:37.39999999999998px;background:#d9d9d9;border-bottom:1.2px solid #fff"></div>
<div class="a" style="left:213.4px;top:670.6px;width:218.1px;height:37.39999999999998px;background:#f2f2f2"></div>
<div class="t" style="left:60.4px;top:681.3px;font-size:10.5px;font-weight:700;color:#111">Outro chamado</div>
<div class="t c" style="left:212.4px;width:109.9px;top:681.3px;font-size:10.6px;color:#1a1a1a;-webkit-text-stroke:0.3px #1a1a1a">0</div>
<div class="t c" style="left:322.3px;width:109.19999999999999px;top:681.3px;font-size:10.6px;color:#1a1a1a;-webkit-text-stroke:0.3px #1a1a1a">0</div>
<svg style="left:0;top:0" width="1600" height="850" viewBox="0 0 1600 850"><path d="M213.4 482.5H431.5M213.4 520.1H431.5M213.4 557.5H431.5M213.4 595.1H431.5M213.4 632.5H431.5M213.4 670.1H431.5M322.8 446V708M431.0 446V708" stroke="#dcdcdc" stroke-width="1" fill="none"/></svg>
<div class="a" style="left:212.4px;top:446px;width:1.2px;height:262px;background:#fff"></div>
<div class="a" style="left:462.6px;top:412.6px;width:379.0px;height:33.39999999999998px;background:#d9d9d9"></div>
<div class="a" style="left:623.4px;top:412.6px;width:1.2px;height:33.39999999999998px;background:#fff"></div>
<div class="a" style="left:733px;top:412.6px;width:1.2px;height:33.39999999999998px;background:#fff"></div>
<div class="a" style="left:462.6px;top:444.8px;width:379.0px;height:1.2px;background:#fff"></div>
<div class="t" style="left:471.1px;top:421px;font-size:10.7px;font-weight:700;color:#111">Top Áreas</div>
<div class="t" style="left:632.9px;top:421px;font-size:10.5px;font-weight:700;color:#111">2026</div>
<div class="t" style="left:741.5px;top:421px;font-size:10.5px;font-weight:700;color:#111">2027</div>
<div class="a" style="left:462.6px;top:446px;width:160.79999999999995px;height:37px;background:#d9d9d9;border-bottom:1.2px solid #fff"></div>
<div class="a" style="left:624.4px;top:446px;width:217.20000000000005px;height:37px;background:#f2f2f2"></div>
<div class="t c" style="left:462.6px;width:160.79999999999995px;top:456.5px;font-size:10.6px;font-weight:700;color:#111">Suprimentos</div>
<div class="t c" style="left:623.4px;width:109.60000000000002px;top:456.5px;font-size:10.6px;color:#1a1a1a;-webkit-text-stroke:0.3px #1a1a1a">5</div>
<div class="t c" style="left:733px;width:108.60000000000002px;top:456.5px;font-size:10.6px;color:#1a1a1a;-webkit-text-stroke:0.3px #1a1a1a">0</div>
<div class="a" style="left:462.6px;top:483px;width:160.79999999999995px;height:37.60000000000002px;background:#d9d9d9;border-bottom:1.2px solid #fff"></div>
<div class="a" style="left:624.4px;top:483px;width:217.20000000000005px;height:37.60000000000002px;background:#f2f2f2"></div>
<div class="t c" style="left:462.6px;width:160.79999999999995px;top:493.8px;font-size:10.6px;font-weight:700;color:#111">Logistica</div>
<div class="t c" style="left:623.4px;width:109.60000000000002px;top:493.8px;font-size:10.6px;color:#1a1a1a;-webkit-text-stroke:0.3px #1a1a1a">4</div>
<div class="t c" style="left:733px;width:108.60000000000002px;top:493.8px;font-size:10.6px;color:#1a1a1a;-webkit-text-stroke:0.3px #1a1a1a">0</div>
<div class="a" style="left:462.6px;top:520.6px;width:160.79999999999995px;height:37.39999999999998px;background:#d9d9d9;border-bottom:1.2px solid #fff"></div>
<div class="a" style="left:624.4px;top:520.6px;width:217.20000000000005px;height:37.39999999999998px;background:#f2f2f2"></div>
<div class="t c" style="left:462.6px;width:160.79999999999995px;top:531.3px;font-size:10.6px;font-weight:700;color:#111">Comercial</div>
<div class="t c" style="left:623.4px;width:109.60000000000002px;top:531.3px;font-size:10.6px;color:#1a1a1a;-webkit-text-stroke:0.3px #1a1a1a">4</div>
<div class="t c" style="left:733px;width:108.60000000000002px;top:531.3px;font-size:10.6px;color:#1a1a1a;-webkit-text-stroke:0.3px #1a1a1a">0</div>
<div class="a" style="left:462.6px;top:558px;width:160.79999999999995px;height:37.60000000000002px;background:#d9d9d9;border-bottom:1.2px solid #fff"></div>
<div class="a" style="left:624.4px;top:558px;width:217.20000000000005px;height:37.60000000000002px;background:#f2f2f2"></div>
<div class="t c" style="left:462.6px;width:160.79999999999995px;top:568.8px;font-size:10.6px;font-weight:700;color:#111">Operação</div>
<div class="t c" style="left:623.4px;width:109.60000000000002px;top:568.8px;font-size:10.6px;color:#1a1a1a;-webkit-text-stroke:0.3px #1a1a1a">4</div>
<div class="t c" style="left:733px;width:108.60000000000002px;top:568.8px;font-size:10.6px;color:#1a1a1a;-webkit-text-stroke:0.3px #1a1a1a">0</div>
<div class="a" style="left:462.6px;top:595.6px;width:160.79999999999995px;height:37.39999999999998px;background:#d9d9d9;border-bottom:1.2px solid #fff"></div>
<div class="a" style="left:624.4px;top:595.6px;width:217.20000000000005px;height:37.39999999999998px;background:#f2f2f2"></div>
<div class="t c" style="left:462.6px;width:160.79999999999995px;top:606.3px;font-size:10.6px;font-weight:700;color:#111">Atendimento</div>
<div class="t c" style="left:623.4px;width:109.60000000000002px;top:606.3px;font-size:10.6px;color:#1a1a1a;-webkit-text-stroke:0.3px #1a1a1a">4</div>
<div class="t c" style="left:733px;width:108.60000000000002px;top:606.3px;font-size:10.6px;color:#1a1a1a;-webkit-text-stroke:0.3px #1a1a1a">0</div>
<svg style="left:0;top:0" width="1600" height="850" viewBox="0 0 1600 850"><path d="M624.4 482.5H841.6M624.4 520.1H841.6M624.4 557.5H841.6M624.4 595.1H841.6M733.5 446V633M841.1 446V633" stroke="#dcdcdc" stroke-width="1" fill="none"/></svg>
<div class="a" style="left:623.4px;top:446px;width:1.2px;height:187px;background:#fff"></div>
<div class="a" style="left:462.8px;top:782.5px;width:160.9px;height:12px;background:#d9d9d9"></div>
<div class="a" style="left:623.7px;top:782.5px;width:108.2px;height:12px;background:#808080"></div>
<div class="a" style="left:734px;top:782.5px;width:107.6px;height:12px;background:#808080"></div>
<div class="t" style="left:862.5px;top:373px;font-size:15px;font-weight:700;color:#111">Tipos de Manifestação</div>
<div class="t" style="left:1196.5px;top:373px;font-size:15px;font-weight:700;color:#111">Top Áreas com Manifestações</div>
<div class="a" style="left:853.6px;top:413.5px;width:331.9px;height:400px;background:#fff;border:1px solid #d9d9d9"></div>
<div class="a" style="left:943.5px;top:427px;width:228.5px;height:344px;background:#f2f2f2;border-left:1px solid #d9d9d9"></div>
<div class="t r" style="left:784.0px;width:150px;top:437.5px;font-size:10.3px;color:#595959">Reclamação</div>
<div class="a" style="left:944.0px;top:430.2px;width:151.6px;height:14.6px;background:#ffc000;border:1px solid #66792c;"></div>
<div class="t c" style="left:1099.1px;width:14px;top:430.8px;font-size:10.3px;color:#404040;-webkit-text-stroke:0.1px #404040">4</div>
<div class="t c" style="left:947.5px;width:14px;top:445.8px;font-size:10.3px;color:#404040;-webkit-text-stroke:0.1px #404040">0</div>
<div class="t r" style="left:784.0px;width:150px;top:471.9px;font-size:10.3px;color:#595959">Denúncia</div>
<div class="a" style="left:944.0px;top:464.59999999999997px;width:151.6px;height:14.6px;background:#ffc000;border:1px solid #66792c;"></div>
<div class="t c" style="left:1099.1px;width:14px;top:465.2px;font-size:10.3px;color:#404040;-webkit-text-stroke:0.1px #404040">4</div>
<div class="t c" style="left:947.5px;width:14px;top:480.2px;font-size:10.3px;color:#404040;-webkit-text-stroke:0.1px #404040">0</div>
<div class="t r" style="left:784.0px;width:150px;top:506.3px;font-size:10.3px;color:#595959">Elogio</div>
<div class="a" style="left:944.0px;top:499.0px;width:151.6px;height:14.6px;background:#ffc000;border:1px solid #66792c;"></div>
<div class="t c" style="left:1099.1px;width:14px;top:499.6px;font-size:10.3px;color:#404040;-webkit-text-stroke:0.1px #404040">4</div>
<div class="t c" style="left:947.5px;width:14px;top:514.5999999999999px;font-size:10.3px;color:#404040;-webkit-text-stroke:0.1px #404040">0</div>
<div class="t r" style="left:784.0px;width:150px;top:540.7px;font-size:10.3px;color:#595959">Sugestão</div>
<div class="t c" style="left:947.5px;width:14px;top:534.7px;font-size:10.3px;color:#404040;-webkit-text-stroke:0.1px #404040">0</div>
<div class="t c" style="left:947.5px;width:14px;top:548.7px;font-size:10.3px;color:#404040;-webkit-text-stroke:0.1px #404040">0</div>
<div class="t r" style="left:784.0px;width:150px;top:575.1px;font-size:10.3px;color:#595959">Informação</div>
<div class="a" style="left:944.0px;top:567.8000000000001px;width:189.5px;height:14.6px;background:#ffc000;border:1px solid #66792c;"></div>
<div class="t c" style="left:1137.0px;width:14px;top:568.4px;font-size:10.3px;color:#404040;-webkit-text-stroke:0.1px #404040">5</div>
<div class="t c" style="left:947.5px;width:14px;top:583.4px;font-size:10.3px;color:#404040;-webkit-text-stroke:0.1px #404040">0</div>
<div class="t r" style="left:784.0px;width:150px;top:609.5px;font-size:10.3px;color:#595959">Solicitação</div>
<div class="a" style="left:944.0px;top:602.2px;width:151.6px;height:14.6px;background:#ffc000;border:1px solid #66792c;"></div>
<div class="t c" style="left:1099.1px;width:14px;top:602.8px;font-size:10.3px;color:#404040;-webkit-text-stroke:0.1px #404040">4</div>
<div class="t c" style="left:947.5px;width:14px;top:617.8px;font-size:10.3px;color:#404040;-webkit-text-stroke:0.1px #404040">0</div>
<div class="t r" style="left:784.0px;width:150px;top:643.9px;font-size:10.3px;color:#595959">Outro chamado</div>
<div class="t c" style="left:947.5px;width:14px;top:637.9px;font-size:10.3px;color:#404040;-webkit-text-stroke:0.1px #404040">0</div>
<div class="t c" style="left:947.5px;width:14px;top:651.9px;font-size:10.3px;color:#404040;-webkit-text-stroke:0.1px #404040">0</div>
<div class="t r" style="left:784.0px;width:150px;top:678.3px;font-size:10.3px;color:#595959">0</div>
<div class="t c" style="left:947.5px;width:14px;top:672.3px;font-size:10.3px;color:#404040;-webkit-text-stroke:0.1px #404040">0</div>
<div class="t c" style="left:947.5px;width:14px;top:686.3px;font-size:10.3px;color:#404040;-webkit-text-stroke:0.1px #404040">0</div>
<div class="t r" style="left:784.0px;width:150px;top:712.7px;font-size:10.3px;color:#595959">0</div>
<div class="t c" style="left:947.5px;width:14px;top:706.7px;font-size:10.3px;color:#404040;-webkit-text-stroke:0.1px #404040">0</div>
<div class="t c" style="left:947.5px;width:14px;top:720.7px;font-size:10.3px;color:#404040;-webkit-text-stroke:0.1px #404040">0</div>
<div class="t r" style="left:784.0px;width:150px;top:747.0999999999999px;font-size:10.3px;color:#595959">0</div>
<div class="t c" style="left:947.5px;width:14px;top:741.0999999999999px;font-size:10.3px;color:#404040;-webkit-text-stroke:0.1px #404040">0</div>
<div class="t c" style="left:947.5px;width:14px;top:755.0999999999999px;font-size:10.3px;color:#404040;-webkit-text-stroke:0.1px #404040">0</div>
<div class="a" style="left:986px;top:792.5px;width:6px;height:6px;background:#5ba08c"></div><div class="t" style="left:994px;top:788.5px;font-size:10.3px;color:#595959">2026</div><div class="a" style="left:1026px;top:792.5px;width:6px;height:6px;background:#1f3864"></div><div class="t" style="left:1035px;top:788.5px;font-size:10.3px;color:#595959">2027</div>
<div class="a" style="left:1191.5px;top:413.5px;width:311.0px;height:400px;background:#fff;border:1px solid #d9d9d9"></div>
<div class="a" style="left:1250px;top:429px;width:241px;height:346px;background:#f2f2f2;border-left:1px solid #d9d9d9"></div>
<div class="a c" style="left:1192px;width:52px;top:434.52222222222224px;font-size:10.3px;line-height:13.5px;color:#595959">Suprimen<br>tos</div>
<div class="a" style="left:1250.5px;top:432.0px;width:200.5px;height:15.6px;background:#ffc000;"></div>
<div class="t c" style="left:1454.5px;width:14px;top:433.1px;font-size:10.3px;color:#404040;-webkit-text-stroke:0.1px #404040">5</div>
<div class="t c" style="left:1254px;width:14px;top:449.8px;font-size:10.3px;color:#404040;-webkit-text-stroke:0.1px #404040">0</div>
<div class="t r" style="left:1090.5px;width:150px;top:479.9666666666667px;font-size:10.3px;color:#595959">Logistica</div>
<div class="a" style="left:1250.5px;top:470.44444444444446px;width:160.4px;height:15.6px;background:#ffc000;"></div>
<div class="t c" style="left:1414.4px;width:14px;top:471.5444444444445px;font-size:10.3px;color:#404040;-webkit-text-stroke:0.1px #404040">4</div>
<div class="t c" style="left:1254px;width:14px;top:488.24444444444447px;font-size:10.3px;color:#404040;-webkit-text-stroke:0.1px #404040">0</div>
<div class="t r" style="left:1090.5px;width:150px;top:518.411111111111px;font-size:10.3px;color:#595959">Comercial</div>
<div class="a" style="left:1250.5px;top:508.8888888888889px;width:160.4px;height:15.6px;background:#ffc000;"></div>
<div class="t c" style="left:1414.4px;width:14px;top:509.9888888888889px;font-size:10.3px;color:#404040;-webkit-text-stroke:0.1px #404040">4</div>
<div class="t c" style="left:1254px;width:14px;top:526.6888888888889px;font-size:10.3px;color:#404040;-webkit-text-stroke:0.1px #404040">0</div>
<div class="t r" style="left:1090.5px;width:150px;top:556.8555555555555px;font-size:10.3px;color:#595959">Operação</div>
<div class="a" style="left:1250.5px;top:547.3333333333334px;width:160.4px;height:15.6px;background:#ffc000;"></div>
<div class="t c" style="left:1414.4px;width:14px;top:548.4333333333333px;font-size:10.3px;color:#404040;-webkit-text-stroke:0.1px #404040">4</div>
<div class="t c" style="left:1254px;width:14px;top:565.1333333333333px;font-size:10.3px;color:#404040;-webkit-text-stroke:0.1px #404040">0</div>
<div class="a c" style="left:1192px;width:52px;top:588.3px;font-size:10.3px;line-height:13.5px;color:#595959">Atendime<br>nto</div>
<div class="a" style="left:1250.5px;top:585.7777777777778px;width:160.4px;height:15.6px;background:#ffc000;"></div>
<div class="t c" style="left:1414.4px;width:14px;top:586.8777777777777px;font-size:10.3px;color:#404040;-webkit-text-stroke:0.1px #404040">4</div>
<div class="t c" style="left:1254px;width:14px;top:603.5777777777778px;font-size:10.3px;color:#404040;-webkit-text-stroke:0.1px #404040">0</div>
<div class="t r" style="left:1090.5px;width:150px;top:633.7444444444443px;font-size:10.3px;color:#595959">0</div>
<div class="t c" style="left:1254px;width:14px;top:626.5222222222221px;font-size:10.3px;color:#404040;-webkit-text-stroke:0.1px #404040">0</div>
<div class="t c" style="left:1254px;width:14px;top:642.0222222222221px;font-size:10.3px;color:#404040;-webkit-text-stroke:0.1px #404040">0</div>
<div class="t r" style="left:1090.5px;width:150px;top:672.1888888888888px;font-size:10.3px;color:#595959">0</div>
<div class="t c" style="left:1254px;width:14px;top:664.9666666666666px;font-size:10.3px;color:#404040;-webkit-text-stroke:0.1px #404040">0</div>
<div class="t c" style="left:1254px;width:14px;top:680.4666666666666px;font-size:10.3px;color:#404040;-webkit-text-stroke:0.1px #404040">0</div>
<div class="t r" style="left:1090.5px;width:150px;top:710.6333333333332px;font-size:10.3px;color:#595959">0</div>
<div class="t c" style="left:1254px;width:14px;top:703.411111111111px;font-size:10.3px;color:#404040;-webkit-text-stroke:0.1px #404040">0</div>
<div class="t c" style="left:1254px;width:14px;top:718.911111111111px;font-size:10.3px;color:#404040;-webkit-text-stroke:0.1px #404040">0</div>
<div class="t r" style="left:1090.5px;width:150px;top:749.0777777777777px;font-size:10.3px;color:#595959">0</div>
<div class="t c" style="left:1254px;width:14px;top:741.8555555555555px;font-size:10.3px;color:#404040;-webkit-text-stroke:0.1px #404040">0</div>
<div class="t c" style="left:1254px;width:14px;top:757.3555555555555px;font-size:10.3px;color:#404040;-webkit-text-stroke:0.1px #404040">0</div>
<div class="a" style="left:1312px;top:792.5px;width:6px;height:6px;background:#ffc000"></div><div class="t" style="left:1320px;top:788.5px;font-size:10.3px;color:#595959">2026</div><div class="a" style="left:1352px;top:792.5px;width:6px;height:6px;background:#1f3864"></div><div class="t" style="left:1360px;top:788.5px;font-size:10.3px;color:#595959">2027</div>
</div>
<!-- /GRID2 -->
<!-- STATUS -->
<!-- STATUS_CONTENT -->
<!-- vertical scrollbar -->
<div class="a" style="left:1582px;top:224px;width:16.5px;height:571.5px;background:#f5f5f5;border-radius:8px"></div>
<svg style="left:1584px;top:229px" width="11" height="8" viewBox="0 0 11 8"><path d="M5.5 .8L10.2 7.2H.8Z" fill="#6b6b6b" stroke="#6b6b6b" stroke-width="1" stroke-linejoin="round"/></svg>
<div class="a" style="left:1585.2px;top:242px;width:8.8px;height:80px;background:#6e6e6e;border-radius:4.5px"></div>
<svg style="left:1584px;top:784px" width="11" height="8" viewBox="0 0 11 8"><path d="M5.5 7.2L10.2 .8H.8Z" fill="#6b6b6b" stroke="#6b6b6b" stroke-width="1" stroke-linejoin="round"/></svg>
<!-- horizontal scrollbar -->
<svg style="left:14px;top:805px" width="5" height="13" viewBox="0 0 5 13"><circle cx="2.5" cy="1.8" r="1.3" fill="#333"/><circle cx="2.5" cy="6.3" r="1.3" fill="#333"/><circle cx="2.5" cy="10.8" r="1.3" fill="#333"/></svg>
<div class="a" style="left:33px;top:802.4px;width:1546.5px;height:16.5px;background:#f5f5f5;border-radius:8px"></div>
<svg style="left:38px;top:806px" width="8" height="10" viewBox="0 0 8 10"><path d="M.8 5L7.2 .8V9.2Z" fill="#6b6b6b" stroke="#6b6b6b" stroke-width="1" stroke-linejoin="round"/></svg>
<div class="a" style="left:51px;top:806px;width:1434px;height:9px;background:#6e6e6e;border-radius:4.5px"></div>
<svg style="left:1568.5px;top:806px" width="8" height="10" viewBox="0 0 8 10"><path d="M7.2 5L.8 .8V9.2Z" fill="#6b6b6b" stroke="#6b6b6b" stroke-width="1" stroke-linejoin="round"/></svg>
<!-- status bar -->
<div class="a" style="left:0;top:827px;width:1600px;height:23px;background:#f3f3f3;border-top:1px solid #d6d6d6"></div>
<div class="t" style="left:11.5px;top:832px;font-size:11px;color:#333">Pronto</div>
<svg style="left:0;top:820px" width="130" height="30" viewBox="0 820 130 30">
 <path d="M70.5 845.1H66.6V833.5H80.2V837" fill="none" stroke="#333" stroke-width="1.2"/>
 <path d="M66.6 834.6H80.2" stroke="#333" stroke-width="2"/>
 <path d="M68.2 837.8H70M68.2 840H70M68.2 842.2H70" stroke="#555" stroke-width="0.9"/>
 <circle cx="75.9" cy="841.5" r="4.3" fill="#f3f3f3" stroke="#333" stroke-width="1.2"/><circle cx="75.9" cy="841.5" r="2.1" fill="#222"/>
 <circle cx="105.4" cy="834" r="1.5" fill="none" stroke="#333" stroke-width="1.1"/>
 <path d="M99.6 836.3C100.4 834.8 101.8 835.6 103.2 836.8H107.6C109 835.6 110.4 834.8 111.2 836.3C111.5 837 110.5 837.8 108.3 838.8L107.8 840M103.2 836.8C103 839.5 102.8 842 102.3 845C102.6 846 103.8 846 104.2 845L105.6 842.2" fill="none" stroke="#333" stroke-width="1.1" stroke-linejoin="round"/>
 <path d="M107.6 839.6L113.6 846M113.6 839.6L107.6 846" stroke="#333" stroke-width="1"/>
</svg>
<div class="t" style="left:118px;top:832px;font-size:10.55px;font-weight:700;color:#333">Acessibilidade: investigar</div>
<svg style="left:1156px;top:832px" width="17" height="15" viewBox="0 0 17 15">
 <path d="M6 9.6H.6V.6H14.6V4" fill="none" stroke="#444" stroke-width="1.1"/>
 <circle cx="10.5" cy="10" r="2.6" fill="none" stroke="#444" stroke-width="1.6"/>
 <path d="M10.5 6V7M10.5 13V14M6.5 10H7.5M13.5 10H14.5M7.7 7.2L8.4 7.9M12.6 12.1L13.3 12.8M7.7 12.8L8.4 12.1M12.6 7.9L13.3 7.2" stroke="#444" stroke-width="1.1"/>
</svg>
<div class="t" style="left:1174.4px;top:832px;font-size:10.85px;color:#333">Exibir Configurações</div>
<div class="a" style="left:1295px;top:828px;width:41.6px;height:22px;background:#dcdcdc"></div>
<svg style="left:1308px;top:832px" width="15" height="14" viewBox="0 0 15 14"><path d="M.6 .6H14.4V13.4H.6ZM5.2 .6V13.4M9.8 .6V13.4M.6 4.9H14.4M.6 9.1H14.4" fill="none" stroke="#444" stroke-width="1.2"/></svg>
<svg style="left:1350px;top:832px" width="16" height="14" viewBox="0 0 16 14"><path d="M.6 .6H15.4V13.4H.6Z" fill="none" stroke="#444" stroke-width="1.2"/><path d="M3.6 3.2H12.4V10.8H3.6ZM5.5 5.3H10.5M5.5 7.2H10.5M5.5 9H10.5" fill="none" stroke="#444" stroke-width="1"/></svg>
<svg style="left:1392px;top:832px" width="15" height="14" viewBox="0 0 15 14"><path d="M.6 .6H14.4V13.4H.6Z" fill="none" stroke="#444" stroke-width="1.2"/><path d="M.6 7H8.5V.6M4.5 .6V7" fill="none" stroke="#444" stroke-width="1.1"/></svg>
<svg style="left:1425px;top:838px" width="10" height="2" viewBox="0 0 10 2"><path d="M.5 1H9.5" stroke="#444" stroke-width="1.2"/></svg>
<div class="a" style="left:1439px;top:839px;width:104px;height:1px;background:#666"></div>
<div class="a" style="left:1483.2px;top:833px;width:4.6px;height:12px;background:#555"></div>
<div class="a" style="left:1490.5px;top:836px;width:1px;height:7px;background:#666"></div>
<svg style="left:1548px;top:835px" width="9" height="9" viewBox="0 0 9 9"><path d="M4.5 0V9M0 4.5H9" stroke="#444" stroke-width="1.1"/></svg>
<div class="t" style="left:1570px;top:832px;font-size:11px;color:#333">90%</div>

</body></html>
